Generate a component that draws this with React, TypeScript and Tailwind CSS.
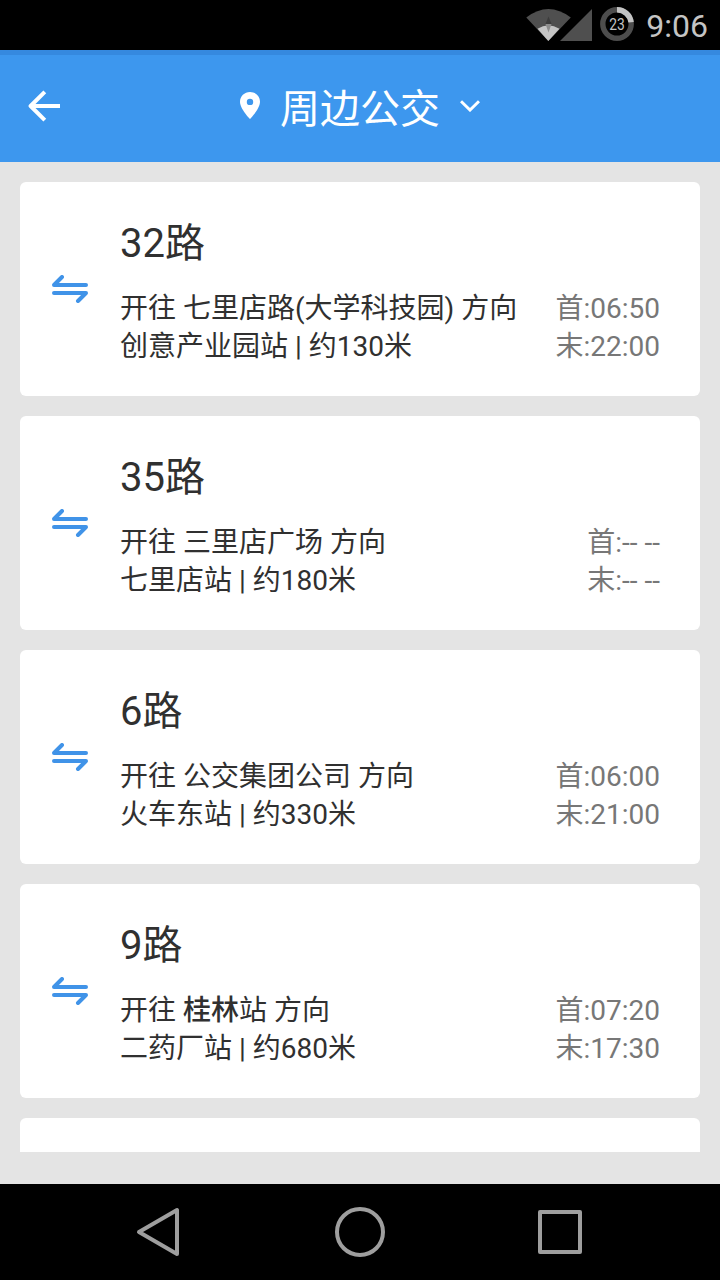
type Route = {
  name: string;
  toward: string;
  emphasis?: string;
  stop: string;
  first: string;
  last: string;
};

const routes: Route[] = [
  { name: "32路", toward: "七里店路(大学科技园)", stop: "创意产业园站 | 约130米", first: "06:50", last: "22:00" },
  { name: "35路", toward: "三里店广场", stop: "七里店站 | 约180米", first: "-- --", last: "-- --" },
  { name: "6路", toward: "公交集团公司", stop: "火车东站 | 约330米", first: "06:00", last: "21:00" },
  { name: "9路", emphasis: "桂林", toward: "站", stop: "二药厂站 | 约680米", first: "07:20", last: "17:30" },
];

function StatusBar() {
  return (
    <div className="flex h-[50px] shrink-0 items-center justify-end bg-black pr-3">
      <svg className="h-[50px] w-[120px]" viewBox="0 0 120 50">
        <path d="M28.3 41 L6.3 17.5 Q28.3 0.5 50.8 17.5 Z" fill="#4f4f4f" />
        <path d="M28.3 41 L17.5 28.8 Q28.3 21.5 39.5 28.8 Z" fill="#c4c4c4" />
        <path d="M28.5 16.5 L31.5 24 L25.5 24 Z" fill="#3c3c3c" />
        <path d="M25.5 24 L31.5 24 L28.5 32.5 Z" fill="#8c8c8c" />
        <path d="M72 9 V41 H40 Z" fill="#4f4f4f" />
        <circle cx="97" cy="24" r="14.2" fill="none" stroke="#4d4d4d" strokeWidth="5.4" />
        <path d="M97 9.8 A14.2 14.2 0 0 1 111.1 22.3" fill="none" stroke="#c4c4c4" strokeWidth="5.4" />
        <text x="97" y="29.8" textAnchor="middle" fontSize="16" textLength="15.5" lengthAdjust="spacingAndGlyphs" fill="#c4c4c4">23</text>
      </svg>
      <span className="ml-[6px] w-[62px] pt-px text-right text-[32px] leading-[50px] text-[#c4c4c4]">9:06</span>
    </div>
  );
}

function Header() {
  return (
    <header className="flex h-28 shrink-0 items-center bg-[#3d97ee] text-white shadow-[inset_0_5px_0_#3589df]">
      <div className="flex w-60 pl-7">
        <svg className="h-8 w-8" viewBox="0 0 32 32" fill="none" stroke="currentColor" strokeWidth="4">
          <path d="M2.5 16 H32" />
          <path d="M16.8 1.8 L2.6 16 L16.8 30.2" strokeLinejoin="round" />
        </svg>
      </div>
      <svg className="h-7 w-5" viewBox="0 0 20 28">
        <path fillRule="evenodd" d="M10 0 C4.4 0 0 4.3 0 9.8 C0 17 10 27 10 27 S20 17 20 9.8 C20 4.3 15.6 0 10 0 Z M10 6.7 A3.2 3.2 0 1 1 10 13.1 A3.2 3.2 0 1 1 10 6.7 Z" fill="currentColor" />
      </svg>
      <h1 className="ml-5 pt-2 text-[40px] leading-[56px]">周边公交</h1>
      <svg className="ml-5 h-3 w-5" viewBox="0 0 20 12" fill="none" stroke="currentColor" strokeWidth="3">
        <path d="M1 1.2 L10 10 L19 1.2" />
      </svg>
    </header>
  );
}

function SwapIcon() {
  return (
    <svg className="h-7 w-9 text-[#4093e8]" viewBox="0 0 36 28" fill="none" stroke="currentColor" strokeWidth="4" strokeLinecap="round" strokeLinejoin="round">
      <path d="M34 10 H2 L10 2" />
      <path d="M2 18 H34 L26 26" />
    </svg>
  );
}

function RouteCard({ route }: { route: Route }) {
  return (
    <li className="flex h-[214px] shrink-0 rounded-md bg-white">
      <div className="flex w-[100px] items-center justify-center">
        <SwapIcon />
      </div>
      <div className="flex flex-1 flex-col pt-[38px] pr-10">
        <h2 className="text-[40px] leading-[48px] text-[#303030]">{route.name}</h2>
        <div className="mt-[22px] flex justify-between text-[28px] leading-[38px] whitespace-nowrap">
          <div className="text-[#303030]">
            <p>
              开往 {route.emphasis && <span className="font-medium">{route.emphasis}</span>}
              {route.toward} 方向
            </p>
            <p>{route.stop}</p>
          </div>
          <div className="text-[#777777]">
            <p>首:{route.first}</p>
            <p>末:{route.last}</p>
          </div>
        </div>
      </div>
    </li>
  );
}

function NavBar() {
  return (
    <nav className="flex h-24 shrink-0 items-center justify-between bg-black px-[134px]">
      <svg className="h-[52px] w-[52px]" viewBox="0 0 52 52" fill="none" stroke="#9e9e9e" strokeWidth="4" strokeLinejoin="round">
        <path d="M43 4 V48 L5 26 Z" />
      </svg>
      <svg className="h-[52px] w-[52px]" viewBox="0 0 52 52" fill="none" stroke="#9e9e9e" strokeWidth="4">
        <circle cx="26" cy="26" r="23" />
      </svg>
      <svg className="h-[52px] w-[52px]" viewBox="0 0 52 52" fill="none" stroke="#9e9e9e" strokeWidth="4" strokeLinejoin="round">
        <rect x="6" y="6" width="40" height="40" />
      </svg>
    </nav>
  );
}

export default function App() {
  return (
    <div lang="zh-CN" className="flex h-[1280px] w-[720px] flex-col overflow-hidden bg-[#e4e4e4] font-[Roboto,'Noto_Sans_CJK_SC',sans-serif]">
      <StatusBar />
      <Header />
      <ul className="mb-8 flex min-h-0 flex-1 flex-col gap-5 overflow-hidden px-5 pt-5">
        {routes.map((route) => (
          <RouteCard key={route.name} route={route} />
        ))}
        <li className="h-[214px] shrink-0 rounded-md bg-white" />
      </ul>
      <NavBar />
    </div>
  );
}
